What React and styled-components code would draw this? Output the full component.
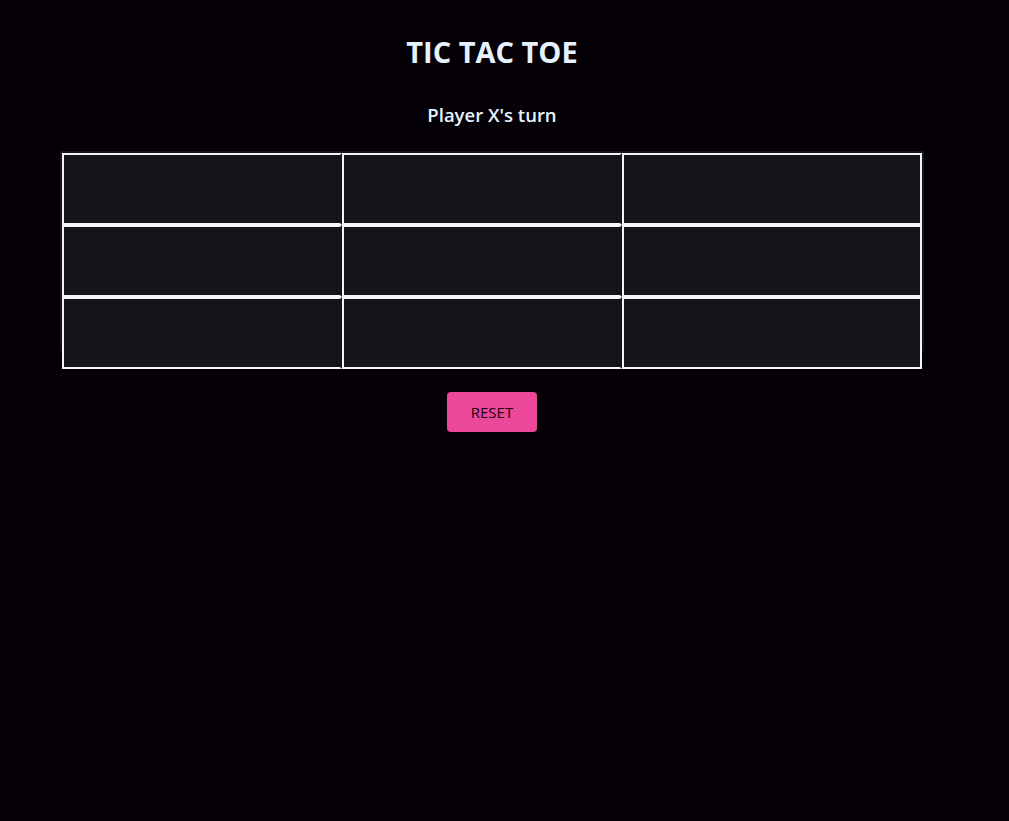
import React, { useState } from 'react';
import styled, { createGlobalStyle } from 'styled-components';

const GlobalStyle = createGlobalStyle`
  html, body {
    margin: 0;
    padding: 0;
    background-color: #050005;
    font-family: 'Open Sans', 'Noto Sans', sans-serif;
  }
`;

const Wrapper = styled.div`
  width: 984px;
  min-height: 821px;
  text-align: center;
  padding-top: 30px;
  box-sizing: border-box;
`;

const Title = styled.h1`
  margin: 0;
  font-size: 29px;
  line-height: 44px;
  font-weight: 700;
  color: #e6f3ff;
`;

const Status = styled.h2`
  margin: 27px 0 0;
  font-size: 18.5px;
  line-height: 28px;
  font-weight: 600;
  color: #e6f3ff;
`;

const Board = styled.div`
  width: 864px;
  height: 200px;
  margin: 22px auto 0;
  padding: 2px;
  box-sizing: border-box;
  background-color: #14141b;
  display: grid;
  grid-template-columns: 280px 280px 300px;
  grid-auto-rows: 72px;
  align-content: start;
`;

const Cell = styled.button`
  box-sizing: border-box;
  margin: 0;
  padding: 0;
  background-color: #14141b;
  border: 2px solid #f5f5f5;
  border-right-color: ${(props) => (props.$last ? '#f5f5f5' : '#14141b')};
  font-family: inherit;
  font-size: 40px;
  font-weight: 700;
  color: #e6f3ff;
  cursor: pointer;
`;

const ResetButton = styled.button`
  margin-top: 41px;
  width: 90px;
  height: 40px;
  border: none;
  border-radius: 4px;
  background-color: #ec4899;
  color: #1a0010;
  font-family: 'Open Sans', 'Noto Sans', sans-serif;
  font-size: 15px;
  cursor: pointer;
`;

function App() {
  const [cells, setCells] = useState(Array(9).fill(''));
  const [player, setPlayer] = useState('X');

  const play = (i) => {
    if (cells[i]) return;
    const next = cells.slice();
    next[i] = player;
    setCells(next);
    setPlayer(player === 'X' ? 'O' : 'X');
  };

  const reset = () => {
    setCells(Array(9).fill(''));
    setPlayer('X');
  };

  return (
    <>
      <GlobalStyle />
      <Wrapper>
        <Title>TIC TAC TOE</Title>
        <Status>Player {player}'s turn</Status>
        <Board>
          {cells.map((value, i) => (
            <Cell key={i} $last={i % 3 === 2} onClick={() => play(i)}>
              {value}
            </Cell>
          ))}
        </Board>
        <ResetButton onClick={reset}>RESET</ResetButton>
      </Wrapper>
    </>
  );
}

export default App;
